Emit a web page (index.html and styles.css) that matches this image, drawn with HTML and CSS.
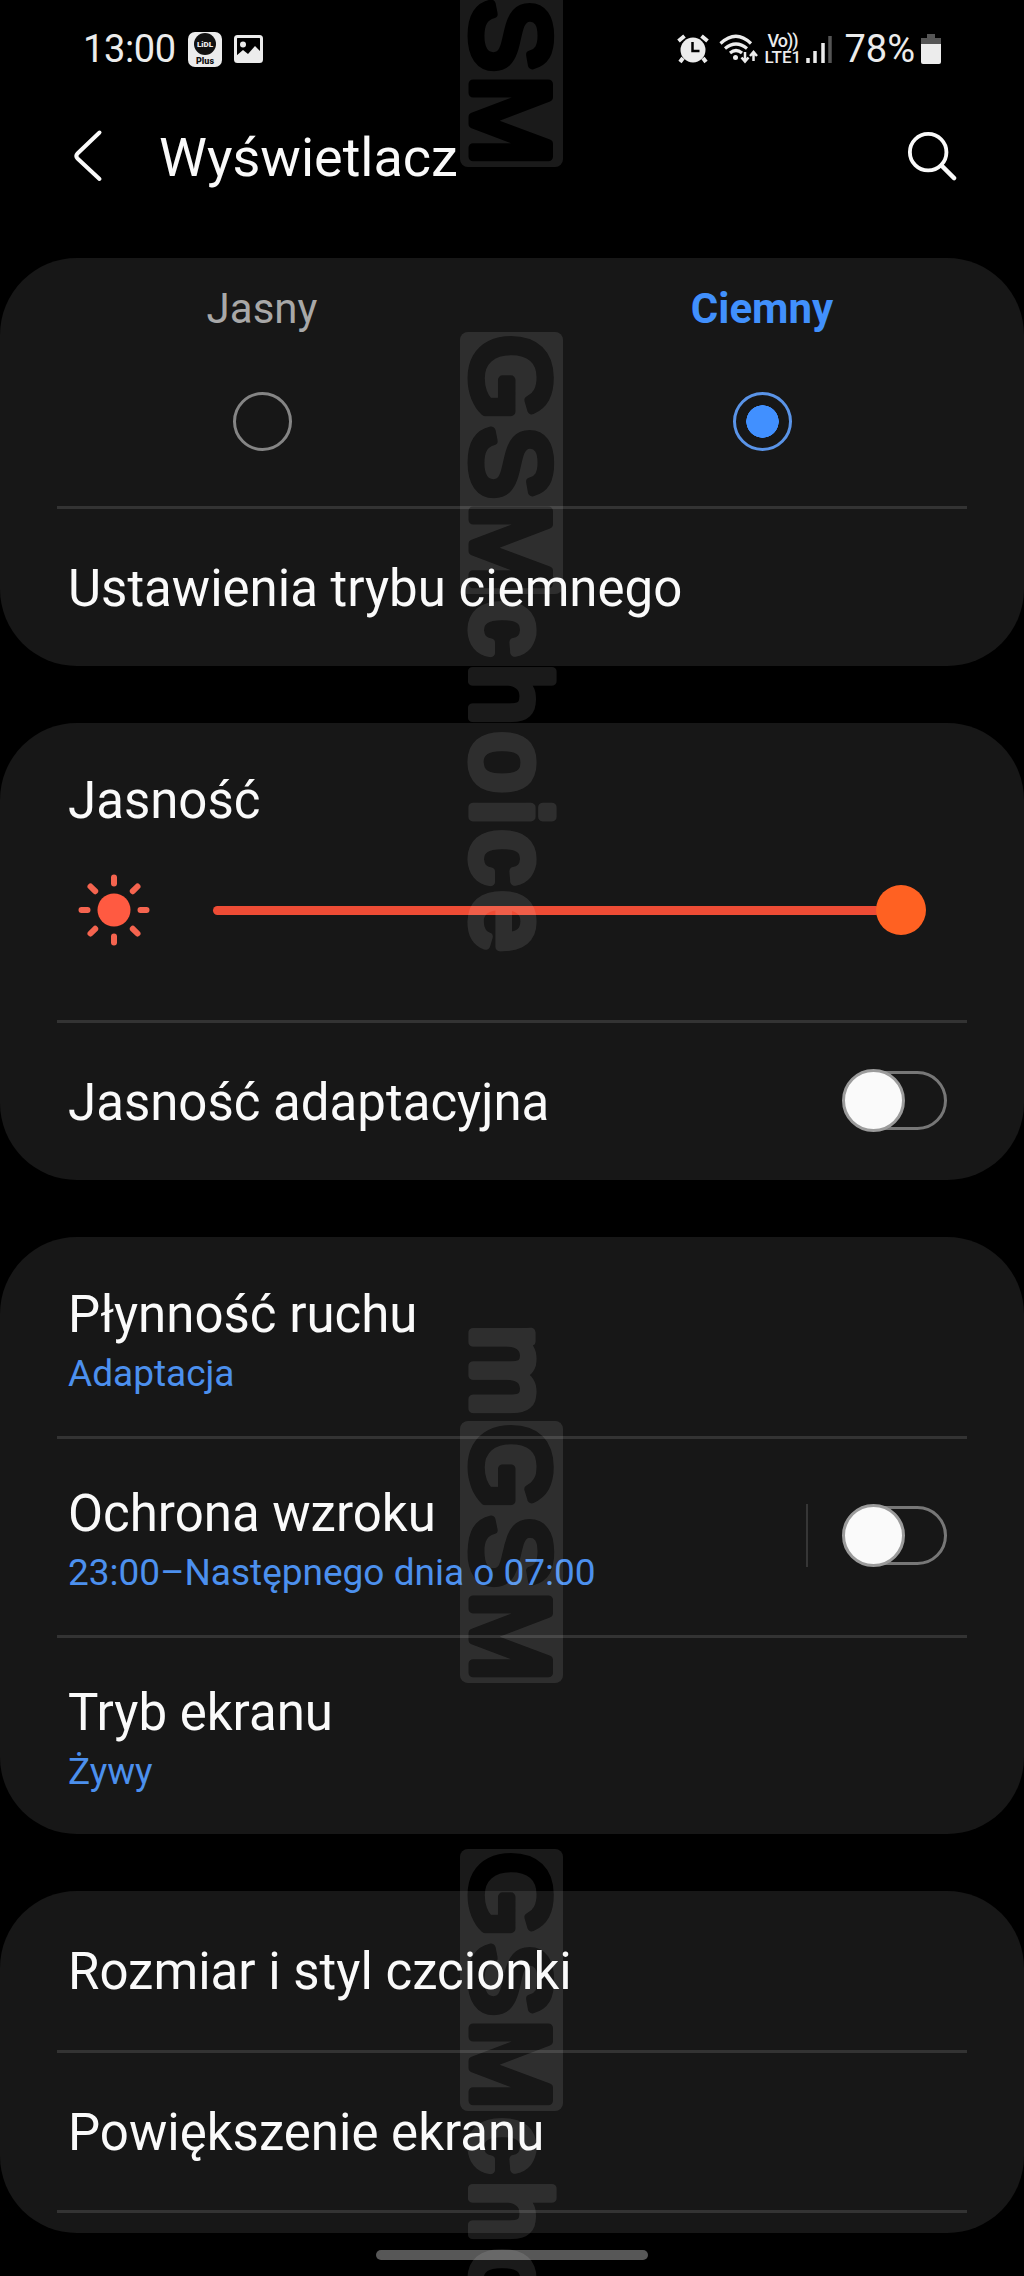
FILE: index.html
```html
<!DOCTYPE html>
<html lang="pl">
<head>
    <meta charset="UTF-8">
    <meta name="viewport" content="width=device-width, initial-scale=1.0">
    <title>Wyświetlacz</title>
    <link rel="stylesheet" href="styles.css">
</head>
<body>
    <div class="statusbar">
        <span class="clock">13:00</span>
        <svg class="app-icon" width="34" height="35" viewBox="0 0 34 35">
            <rect width="34" height="35" rx="7" fill="#ececec"/>
            <circle cx="17" cy="12" r="11" fill="#111"/>
            <text x="17" y="15" class="app-logo">LiDL</text>
            <text x="17" y="32" class="app-plus">Plus</text>
        </svg>
        <svg class="picture-icon" width="29" height="28" viewBox="0 0 29 28">
            <rect x="1.5" y="1.5" width="26" height="25" rx="2" fill="none" stroke="#ececec" stroke-width="3"/>
            <circle cx="9" cy="9.500" r="3" fill="#ececec"/>
            <path d="M2 21l7-6 5 4 7-8 6 6v9H2z" fill="#ececec"/>
        </svg>
        <div class="status-right">
            <svg width="32" height="30" viewBox="0 0 32 30">
                <path d="M6 24l-3 4M26 24l3 4M1.500 7l6-5M30.500 7l-6-5" stroke="#ececec" stroke-width="4"/>
                <circle cx="16" cy="16" r="12.500" fill="#ececec"/>
                <path d="M15.500 8v9h7" fill="none" stroke="#000" stroke-width="2.500"/>
            </svg>
            <svg class="wifi" width="39" height="31" viewBox="0 0 39 31">
                <g fill="none" stroke="#ececec" stroke-width="3.200">
                    <path d="M1.500 9.500Q17-5 32 9.500"/>
                    <path d="M6 14.500q11-9 22 0"/>
                    <path d="M11 19q6-5 12 0"/>
                    <path d="M26 18v9M22.500 23.500l3.500 4 3.500-4M34.500 27v-8M31 22l3.500-4 3.500 4" stroke-width="2.500"/>
                </g>
                <circle cx="16.500" cy="23.500" r="2.500" fill="#ececec"/>
            </svg>
            <div class="lte">
                <span class="volte">Vo))</span>
                <span>LTE1</span>
            </div>
            <svg class="signal" width="26" height="28" viewBox="0 0 26 28">
                <path d="M2 28v-5M9 28V16M17 28V8" stroke="#ececec" stroke-width="3.500"/>
                <path d="M24 28V1" stroke="#555" stroke-width="3.500"/>
            </svg>
            <span class="percent">78%</span>
            <svg class="battery" width="20" height="30" viewBox="0 0 20 30">
                <path d="M6 0h8v4h6v7H0V4h6z" fill="#555"/>
                <path d="M0 10h20v18q0 2-2 2H2q-2 0-2-2z" fill="#ececec"/>
            </svg>
        </div>
    </div>

    <header>
        <svg class="back" width="30" height="54" viewBox="0 0 30 54">
            <path d="M26.500 3.500L4.500 24.500q-2.500 2.500 0 5L26.500 50" fill="none" stroke="#fafafa" stroke-width="4" stroke-linecap="round"/>
        </svg>
        <h1>Wyświetlacz</h1>
        <svg class="search" width="50" height="50" viewBox="0 0 52 52">
            <circle cx="22" cy="22" r="19" fill="none" stroke="#fafafa" stroke-width="4"/>
            <path d="M36 36l13 13" stroke="#fafafa" stroke-width="4.500" stroke-linecap="round"/>
        </svg>
    </header>

    <main>
        <section class="card">
            <div class="modes">
                <div class="mode">
                    <span>Jasny</span>
                    <span class="radio"></span>
                </div>
                <div class="mode active">
                    <span>Ciemny</span>
                    <span class="radio"></span>
                </div>
            </div>
            <hr>
            <div class="row">
                <h2>Ustawienia trybu ciemnego</h2>
            </div>
        </section>

        <section class="card">
            <div class="brightness">
                <h2>Jasność</h2>
                <div class="slider">
                    <svg width="72" height="72" viewBox="-36 -36 72 72">
                        <circle r="16.500" fill="#ff5a41"/>
                        <path d="M0-32.500v6M0 26.500v6M-32.500 0h6M26.500 0h6M-23.500-23.500l4.700 4.700M18.800 18.800l4.700 4.700M-23.500 23.500l4.700-4.700M18.800-18.800l4.700-4.700" stroke="#f5644f" stroke-width="6" stroke-linecap="round"/>
                    </svg>
                    <div class="track"></div>
                    <div class="knob"></div>
                </div>
            </div>
            <hr>
            <div class="row">
                <h2>Jasność adaptacyjna</h2>
                <div class="switch"><span></span></div>
            </div>
        </section>

        <section class="card">
            <div class="row double first">
                <div>
                    <h2>Płynność ruchu</h2>
                    <p>Adaptacja</p>
                </div>
            </div>
            <hr>
            <div class="row double">
                <div>
                    <h2>Ochrona wzroku</h2>
                    <p>23:00–Następnego dnia o 07:00</p>
                </div>
                <div class="switch separated"><span></span></div>
            </div>
            <hr>
            <div class="row double">
                <div>
                    <h2>Tryb ekranu</h2>
                    <p>Żywy</p>
                </div>
            </div>
        </section>

        <section class="card last">
            <div class="row first">
                <h2>Rozmiar i styl czcionki</h2>
            </div>
            <hr>
            <div class="row">
                <h2>Powiększenie ekranu</h2>
            </div>
            <hr>
        </section>
    </main>
    <div class="navbar"></div>

    <!-- watermark over the whole screen -->
    <svg class="watermark" width="104" height="2276" viewBox="460 0 104 2276">
        <defs>
            <mask id="cut" maskUnits="userSpaceOnUse" x="0" y="-10" width="262" height="110">
                <rect x="0" y="-10" width="262" height="110" fill="#fff"/>
                <text x="3 94 170" y="80" class="cut">GSM</text>
            </mask>
            <g id="badge">
                <rect x="0" y="-10" width="262" height="103" rx="8" mask="url(#cut)"/>
            </g>
        </defs>
        <g transform="translate(553 -95) rotate(90)">
            <use href="#badge"/>
        </g>
        <g transform="translate(553 332) rotate(90)">
            <use href="#badge"/>
            <text x="269 332 400 468 498 559" y="80">choice</text>
        </g>
        <g transform="translate(553 1421) rotate(90)">
            <text x="-96" y="80">m</text>
            <use href="#badge"/>
        </g>
        <g transform="translate(553 1849) rotate(90)">
            <use href="#badge"/>
            <text x="269 332 400" y="80">cho</text>
        </g>
    </svg>
</body>
</html>
```
FILE: styles.css
```css
* {
    box-sizing: border-box;
}
body {
    position: relative;
    height: 2276px;
    margin: 0;
    overflow: hidden;
    background-color: #000;
    color: #fafafa;
    font-family: Roboto, sans-serif;
}
h1, h2, p {
    margin: 0;
    font-weight: 400;
    white-space: nowrap;
}

/* status bar */
.statusbar {
    display: flex;
    align-items: center;
    height: 98px;
    padding: 0 83px 0 83px;
    color: #ececec;
    font-size: 38px;
}
.clock {
    letter-spacing: -.4px;
}
.app-icon {
    margin-left: 12px;
}
.app-logo, .app-plus {
    font-weight: 900;
    text-anchor: middle;
}
.app-logo {
    font-size: 8px;
    fill: #ececec;
}
.app-plus {
    font-size: 9px;
    fill: #111;
}
.picture-icon {
    margin-left: 12px;
}
.status-right {
    display: flex;
    align-items: center;
    margin-left: auto;
}
.wifi {
    margin-left: 10px;
}
.lte {
    display: flex;
    flex-direction: column;
    width: 38px;
    margin-left: 6px;
    font-size: 17px;
    font-weight: 500;
    line-height: 16px;
}
.volte {
    padding-left: 3px;
    font-size: 18px;
    letter-spacing: -1px;
}
.signal {
    margin-left: 4px;
}
.percent {
    margin-left: 12px;
}
.battery {
    margin-left: 6px;
}

/* title bar */
header {
    display: flex;
    align-items: center;
    height: 160px;
    padding: 0 67px 44px 73px;
}
h1 {
    margin-left: 56px;
    padding-top: 2px;
    font-size: 54px;
}
.search {
    margin-left: auto;
}

/* settings */
main {
    display: flex;
    flex-direction: column;
    gap: 57px;
}
.card {
    border-radius: 77px;
    background-color: #171717;
}
hr {
    height: 3px;
    margin: 0 57px;
    border: 0;
    background-color: #333;
}
h2 {
    font-size: 51px;
    line-height: 60px;
}
p {
    margin-top: 5px;
    color: #4c90ee;
    font-size: 37px;
    line-height: 48px;
}
.row {
    display: flex;
    align-items: center;
    justify-content: space-between;
    height: 157px;
    padding: 0 77px 0 68px;
}
.row h2 {
    padding-top: 2px;
}
.row.first {
    height: 159px;
}
.row.double {
    height: 196px;
}
.row.double.first {
    height: 199px;
}
.row.double > div:first-child {
    padding-top: 4px;
}
.row.double.first > div:first-child {
    padding-top: 7px;
}
.modes {
    display: flex;
    height: 248px;
    padding: 26px 12px 0;
}
.mode {
    display: flex;
    flex: 1;
    flex-direction: column;
    align-items: center;
    gap: 58px;
    color: #a8a8a8;
    font-size: 42px;
    line-height: 50px;
}
.mode.active {
    color: #4190fc;
    font-weight: 700;
}
.radio {
    width: 59px;
    height: 59px;
    border: 3px solid #858585;
    border-radius: 50%;
}
.active .radio {
    border-color: #5a94e8;
    background: radial-gradient(circle, #4190ff 16px, transparent 16.5px);
}
.brightness {
    height: 297px;
    padding: 48px 98px 0 68px;
}
.slider {
    display: flex;
    align-items: center;
    height: 72px;
    margin-top: 43px;
    padding-left: 10px;
}
.track {
    flex: 1;
    height: 9px;
    margin: 0 -4px 0 63px;
    border-radius: 5px;
    background-color: #ee4c35;
}
.knob {
    width: 50px;
    height: 50px;
    border-radius: 50%;
    background-color: #ff6122;
}
.switch {
    display: flex;
    align-items: center;
    width: 104px;
    height: 59px;
    margin-bottom: 3px;
    border: 3px solid #777;
    border-radius: 30px;
}
.switch span {
    width: 63px;
    height: 63px;
    flex-shrink: 0;
    margin-left: -4px;
    border: 3px solid #9b9b9b;
    border-radius: 50%;
    background-color: #fafafa;
}
.separated::before {
    content: "";
    flex-shrink: 0;
    width: 2px;
    height: 63px;
    margin-left: -40px;
    margin-right: 38px;
    background-color: #363636;
}
.last {
    height: 342px;
}

/* gesture bar */
.navbar {
    width: 272px;
    height: 10px;
    margin: 17px auto 0;
    border-radius: 5px;
    background-color: #575757;
}

.watermark {
    position: absolute;
    top: 0;
    left: 460px;
    overflow: visible;
    fill: #fff;
    opacity: .105;
}
.watermark text {
    font-family: "Liberation Sans", sans-serif;
    font-size: 109px;
    stroke: #fff;
    stroke-width: 9px;
    stroke-linejoin: round;
}
.watermark .cut {
    fill: #000;
    stroke: #000;
}
```
